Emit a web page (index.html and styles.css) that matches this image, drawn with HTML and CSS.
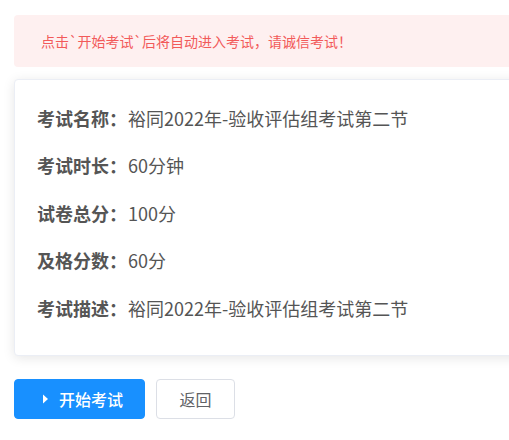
FILE: index.html
```html
<!DOCTYPE html>
<html lang="zh-CN">
<head>
<meta charset="utf-8">
<link rel="stylesheet" href="styles.css">
</head>
<body>
<div class="page">
  <div class="alert">点击`开始考试`后将自动进入考试，请诚信考试！</div>
  <div class="card">
    <div class="row"><span class="label">考试名称：</span><span class="value">裕同2022年-验收评估组考试第二节</span></div>
    <div class="row"><span class="label">考试时长：</span><span class="value">60分钟</span></div>
    <div class="row"><span class="label">试卷总分：</span><span class="value">100分</span></div>
    <div class="row"><span class="label">及格分数：</span><span class="value">60分</span></div>
    <div class="row"><span class="label">考试描述：</span><span class="value">裕同2022年-验收评估组考试第二节</span></div>
  </div>
  <div class="actions">
    <button class="btn btn-primary"><svg class="icon" viewBox="0 0 16 16" width="16" height="16"><path d="M6 3.5 L11 8 L6 12.5 Z" fill="#fff"/></svg><span>开始考试</span></button>
    <button class="btn btn-default">返回</button>
  </div>
</div>
</body>
</html>
```
FILE: styles.css
```css
html, body {
  margin: 0;
  padding: 0;
  background: #fff;
  overflow: hidden;
}
body {
  font-family: "Noto Sans CJK SC", "Noto Sans", sans-serif;
  color: #606266;
}
.page {
  width: 600px;
  padding: 15px 14px;
}
.alert {
  height: 52px;
  display: flex;
  align-items: center;
  padding: 0 27px;
  background: #fef0f0;
  color: #f25a5a;
  font-size: 14px;
  border-radius: 4px;
  white-space: nowrap;
}
.card {
  margin-top: 12px;
  border: 1px solid #ebeef5;
  border-radius: 4px;
  box-shadow: 0 2px 12px 0 rgba(0, 0, 0, 0.1);
  background: #fff;
  padding: 14px 22px 23px;
}
.row {
  padding: 11.75px 0;
  line-height: 24px;
  font-size: 18px;
  display: flex;
  align-items: baseline;
  white-space: nowrap;
}
.label {
  font-weight: bold;
  color: #555;
}
.value {
  color: #555;
  margin-left: 1px;
}
.actions {
  margin-top: 23px;
  display: flex;
  gap: 11px;
}
.btn {
  height: 40px;
  border-radius: 4px;
  font-family: inherit;
  font-size: 16px;
  display: flex;
  align-items: center;
  cursor: pointer;
  white-space: nowrap;
}
.btn-primary {
  background: #1890ff;
  border: 1px solid #1890ff;
  color: #fff;
  padding: 0 21px 0 22px;
  font-weight: 500;
}
.icon {
  margin-right: 6px;
  flex: none;
}
.btn-default {
  background: #fff;
  border: 1px solid #dcdfe6;
  color: #606266;
  width: 79px;
  justify-content: center;
  padding: 0;
}
```
